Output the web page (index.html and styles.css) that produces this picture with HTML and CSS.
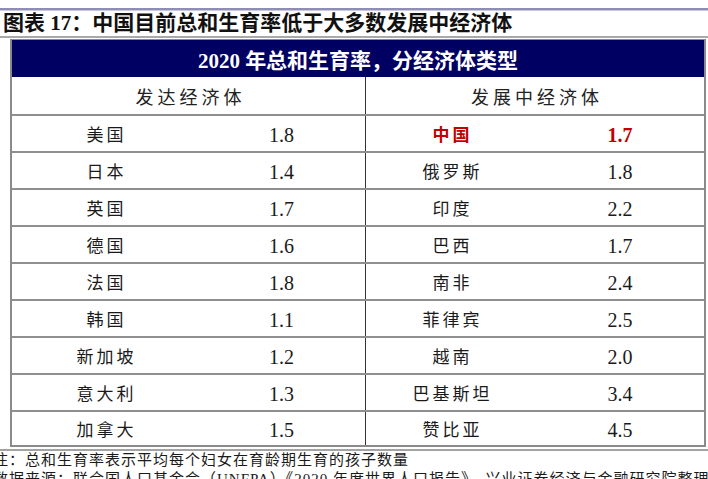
FILE: index.html
```html
<!DOCTYPE html>
<html lang="zh-CN">
<head>
<meta charset="utf-8">
<title>图表 17</title>
<link rel="stylesheet" href="styles.css">
</head>
<body>
<div class="page">
  <div class="topline"></div>
  <h1 class="title">图表 17：中国目前总和生育率低于大多数发展中经济体</h1>
  <div class="rule"></div>
  <div class="table">
    <div class="banner">2020 年总和生育率，分经济体类型</div>
    <div class="row head">
      <div class="half left"><span class="colhead">发达经济体</span></div>
      <div class="half right"><span class="colhead">发展中经济体</span></div>
    </div>
    <div class="row">
      <div class="half left"><span class="name">美国</span><span class="val">1.8</span></div>
      <div class="half right"><span class="name hl">中国</span><span class="val hl">1.7</span></div>
    </div>
    <div class="row">
      <div class="half left"><span class="name">日本</span><span class="val">1.4</span></div>
      <div class="half right"><span class="name">俄罗斯</span><span class="val">1.8</span></div>
    </div>
    <div class="row">
      <div class="half left"><span class="name">英国</span><span class="val">1.7</span></div>
      <div class="half right"><span class="name">印度</span><span class="val">2.2</span></div>
    </div>
    <div class="row">
      <div class="half left"><span class="name">德国</span><span class="val">1.6</span></div>
      <div class="half right"><span class="name">巴西</span><span class="val">1.7</span></div>
    </div>
    <div class="row">
      <div class="half left"><span class="name">法国</span><span class="val">1.8</span></div>
      <div class="half right"><span class="name">南非</span><span class="val">2.4</span></div>
    </div>
    <div class="row">
      <div class="half left"><span class="name">韩国</span><span class="val">1.1</span></div>
      <div class="half right"><span class="name">菲律宾</span><span class="val">2.5</span></div>
    </div>
    <div class="row">
      <div class="half left"><span class="name">新加坡</span><span class="val">1.2</span></div>
      <div class="half right"><span class="name">越南</span><span class="val">2.0</span></div>
    </div>
    <div class="row">
      <div class="half left"><span class="name">意大利</span><span class="val">1.3</span></div>
      <div class="half right"><span class="name">巴基斯坦</span><span class="val">3.4</span></div>
    </div>
    <div class="row last">
      <div class="half left"><span class="name">加拿大</span><span class="val">1.5</span></div>
      <div class="half right"><span class="name">赞比亚</span><span class="val">4.5</span></div>
    </div>
  </div>
  <div class="rule thin"></div>
  <p class="note">注：总和生育率表示平均每个妇女在育龄期生育的孩子数量</p>
  <p class="note">数据来源：联合国人口基金会（UNFPA）《2020 年度世界人口报告》，兴业证券经济与金融研究院整理</p>
</div>
</body>
</html>
```
FILE: styles.css
```css
html, body {
  margin: 0;
  padding: 0;
  background: #ffffff;
  overflow: hidden;
}
body {
  font-family: "Liberation Serif", "Noto Sans CJK SC", serif;
  color: #111111;
}
.page {
  width: 708px;
  padding-top: 8px;
}
.topline {
  height: 2px;
  background: #8e8eb4;
  border-bottom: 1px solid #c9c9dc;
}
.title {
  margin: 0;
  padding-left: 3px;
  height: 25px;
  line-height: 25px;
  font-size: 21px;
  font-weight: 700;
  white-space: nowrap;
}
.rule {
  height: 2px;
  background: #a9a9a9;
  margin-bottom: 1px;
}
.rule.thin {
  margin-top: 2px;
  margin-bottom: 0;
  height: 2px;
  background: #a3a3a3;
}
.table {
  margin-left: 10px;
  width: 692px;
  border: 2px solid #8a8a8a;
  border-top: 1px solid #8a8a8a;
}
.banner {
  height: 37px;
  background: #000062;
  color: #ffffff;
  font-size: 21px;
  font-weight: 700;
  display: flex;
  align-items: center;
  justify-content: center;
}
.row {
  display: flex;
  height: 37px;
  box-sizing: border-box;
  border-top: 2px solid #8f8f8f;
}
.row.head {
  border-top: none;
}
.row.last {
  height: 35px;
}
.half {
  display: grid;
  align-items: center;
}
.half.left {
  width: 353px;
  grid-template-columns: 186px 167px;
  border-right: 1px solid #333333;
}
.half.right {
  width: 338px;
  grid-template-columns: 170px 168px;
}
.row.head .half {
  grid-template-columns: 1fr;
  justify-items: center;
}
.colhead {
  font-size: 18px;
  letter-spacing: 4px;
  padding-left: 4px;
  color: #222222;
}
.name {
  text-align: center;
  font-size: 17px;
  letter-spacing: 3px;
  padding-left: 3px;
  color: #1a1a1a;
}
.val {
  text-align: center;
  font-size: 20px;
  padding-top: 3px;
  color: #1a1a1a;
}
.hl {
  color: #c00000;
  font-weight: 700;
}
.note {
  margin: 0 0 0 -7px;
  font-size: 15px;
  line-height: 19px;
  letter-spacing: 1px;
  white-space: nowrap;
  color: #1a1a1a;
}
```
